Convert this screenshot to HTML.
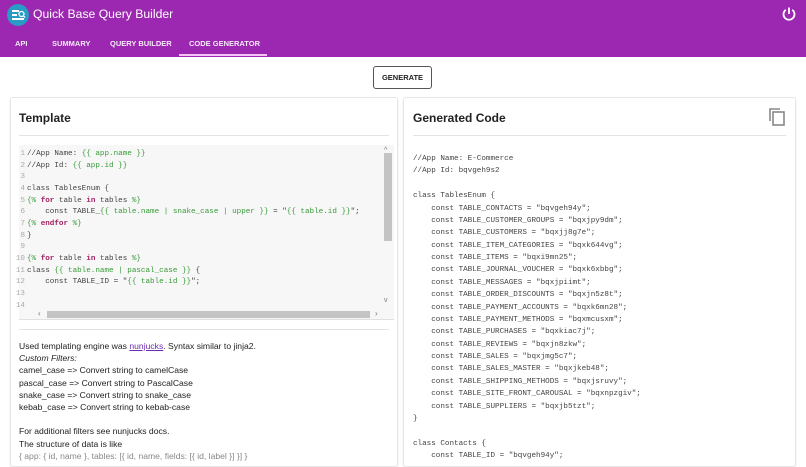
<!DOCTYPE html>
<html><head><meta charset="utf-8"><style>
*{box-sizing:border-box;margin:0;padding:0}
body{width:806px;height:455px;overflow:hidden;background:#fff;font-family:"Liberation Sans",sans-serif;position:relative}
.hdr{position:absolute;left:0;top:0;width:806px;height:57px;background:#9c27b0}
.logo{position:absolute;left:7px;top:4px;width:22px;height:22px;border-radius:50%;background:#2a9bc7}
.title{position:absolute;left:33px;top:7px;color:#fff;font-size:12.2px}
.tab{position:absolute;top:39px;color:#fff;font-size:7.5px;font-weight:bold;opacity:.9}
.ind{position:absolute;left:179px;top:54px;width:88px;height:2px;background:#f3c6f8}
.btn{position:absolute;left:373px;top:66px;width:59px;height:23px;border:1px solid #555;border-radius:3px;font-size:7.5px;font-weight:bold;text-align:center;line-height:21px;color:#222}
.card{position:absolute;top:97px;height:370px;border:1px solid #e6e6e6;border-radius:3px;background:#fff;box-shadow:0 1px 2px rgba(0,0,0,.08)}
.ct{position:absolute;top:111px;font-size:12px;font-weight:bold;color:#222}
.hr{position:absolute;top:135px;height:1px;background:#e3e3e3}
.ed{position:absolute;left:19px;top:145px;width:375px;height:175px;background:#f7f7f7;border-bottom:1px solid #e0e0e0}
pre{font-family:"Liberation Mono",monospace;font-size:7.6px;color:#444}
.ln{position:absolute;left:-10px;top:4px;color:#aaa;text-align:right;width:16px;line-height:11.65px}
.code{position:absolute;left:8px;top:4px;line-height:11.65px}
.g{color:#3a9a3a}.k{color:#a02060;font-weight:bold}
.txt{position:absolute;left:19px;top:340px;font-size:8.6px;line-height:12.2px;color:#222}
.gc{position:absolute;left:413px;top:153px;line-height:12.37px;font-size:7.6px}
</style></head><body>
<div class="hdr">
<div class="logo"><svg width="22" height="22" viewBox="0 0 22 22"><g stroke="#fff" stroke-width="2"><line x1="5" y1="7" x2="12" y2="7"/><line x1="5" y1="11" x2="10" y2="11"/><line x1="5" y1="15" x2="17" y2="15"/></g><circle cx="14.5" cy="10" r="2.5" fill="none" stroke="#fff" stroke-width="1.3"/><line x1="16.3" y1="11.8" x2="18" y2="13.5" stroke="#fff" stroke-width="1.3"/></svg></div>
<div class="title">Quick Base Query Builder</div>
<svg style="position:absolute;left:781px;top:6px" width="16" height="16" viewBox="0 0 16 16"><path d="M8 1.5V8" stroke="#fff" stroke-width="1.8" fill="none"/><path d="M4.8 3.8A5.5 5.5 0 1 0 11.2 3.8" stroke="#fff" stroke-width="1.8" fill="none"/></svg>
<div class="tab" style="left:15px">API</div>
<div class="tab" style="left:52px">SUMMARY</div>
<div class="tab" style="left:110px">QUERY BUILDER</div>
<div class="tab" style="left:189px">CODE GENERATOR</div>
<div class="ind"></div>
</div>
<div class="btn">GENERATE</div>
<div class="card" style="left:10px;width:388px"></div>
<div class="card" style="left:403px;width:393px"></div>
<div class="ct" style="left:19px">Template</div>
<div class="ct" style="left:413px">Generated Code</div>
<svg style="position:absolute;left:768px;top:107px" width="18" height="19" viewBox="0 0 18 19"><path d="M2 14V2h10" stroke="#888" stroke-width="1.6" fill="none"/><rect x="5" y="5" width="11" height="13" stroke="#888" stroke-width="1.6" fill="none"/></svg>
<div class="hr" style="left:19px;width:370px"></div>
<div class="hr" style="left:413px;width:373px"></div>
<div class="ed">
<pre class="ln">1
2
3
4
5
6
7
8
9
10
11
12
13
14</pre>
<pre class="code">//App Name: <span class="g">{{ app.name }}</span>
//App Id: <span class="g">{{ app.id }}</span>

class TablesEnum {
<span class="g">{%</span> <span class="k">for</span> table <span class="k">in</span> tables <span class="g">%}</span>
    const TABLE_<span class="g">{{ table.name | snake_case | upper }}</span> = "<span class="g">{{ table.id }}</span>";
<span class="g">{%</span> <span class="k">endfor</span> <span class="g">%}</span>
}

<span class="g">{%</span> <span class="k">for</span> table <span class="k">in</span> tables <span class="g">%}</span>
class <span class="g">{{ table.name | pascal_case }}</span> {
    const TABLE_ID = "<span class="g">{{ table.id }}</span>";</pre>
<div style="position:absolute;left:365px;top:8px;width:8px;height:88px;background:#c4c4c4"></div>
<div style="position:absolute;left:28px;top:166px;width:323px;height:7px;background:#c4c4c4"></div>
<div style="position:absolute;left:365px;top:2px;font-size:7px;color:#777">^</div>
<div style="position:absolute;left:365px;top:152px;font-size:7px;color:#777">v</div>
<div style="position:absolute;left:19px;top:164px;font-size:8px;color:#777">‹</div>
<div style="position:absolute;left:356px;top:164px;font-size:8px;color:#777">›</div>
</div>
<div class="hr" style="left:19px;top:329px;width:370px"></div>
<div class="txt">Used templating engine was <span style="color:#6a2bb0;text-decoration:underline">nunjucks</span>. Syntax similar to jinja2.<br><i>Custom Filters:</i><br>camel_case =&gt; Convert string to camelCase<br>pascal_case =&gt; Convert string to PascalCase<br>snake_case =&gt; Convert string to snake_case<br>kebab_case =&gt; Convert string to kebab-case<br><br>For additional filters see nunjucks docs.<br>The structure of data is like<br><span style="color:#888">{ app: { id, name }, tables: [{ id, name, fields: [{ id, label }] }] }</span></div>
<pre class="gc" style="position:absolute">//App Name: E-Commerce
//App Id: bqvgeh9s2

class TablesEnum {
    const TABLE_CONTACTS = "bqvgeh94y";
    const TABLE_CUSTOMER_GROUPS = "bqxjpy9dm";
    const TABLE_CUSTOMERS = "bqxjj8g7e";
    const TABLE_ITEM_CATEGORIES = "bqxk644vg";
    const TABLE_ITEMS = "bqxi9mn25";
    const TABLE_JOURNAL_VOUCHER = "bqxk6xbbg";
    const TABLE_MESSAGES = "bqxjpiimt";
    const TABLE_ORDER_DISCOUNTS = "bqxjn5z8t";
    const TABLE_PAYMENT_ACCOUNTS = "bqxk6mn28";
    const TABLE_PAYMENT_METHODS = "bqxmcusxm";
    const TABLE_PURCHASES = "bqxkiac7j";
    const TABLE_REVIEWS = "bqxjn8zkw";
    const TABLE_SALES = "bqxjmg5c7";
    const TABLE_SALES_MASTER = "bqxjkeb48";
    const TABLE_SHIPPING_METHODS = "bqxjsruvy";
    const TABLE_SITE_FRONT_CAROUSAL = "bqxnpzgiv";
    const TABLE_SUPPLIERS = "bqxjb5tzt";
}

class Contacts {
    const TABLE_ID = "bqvgeh94y";</pre>
</body></html>
